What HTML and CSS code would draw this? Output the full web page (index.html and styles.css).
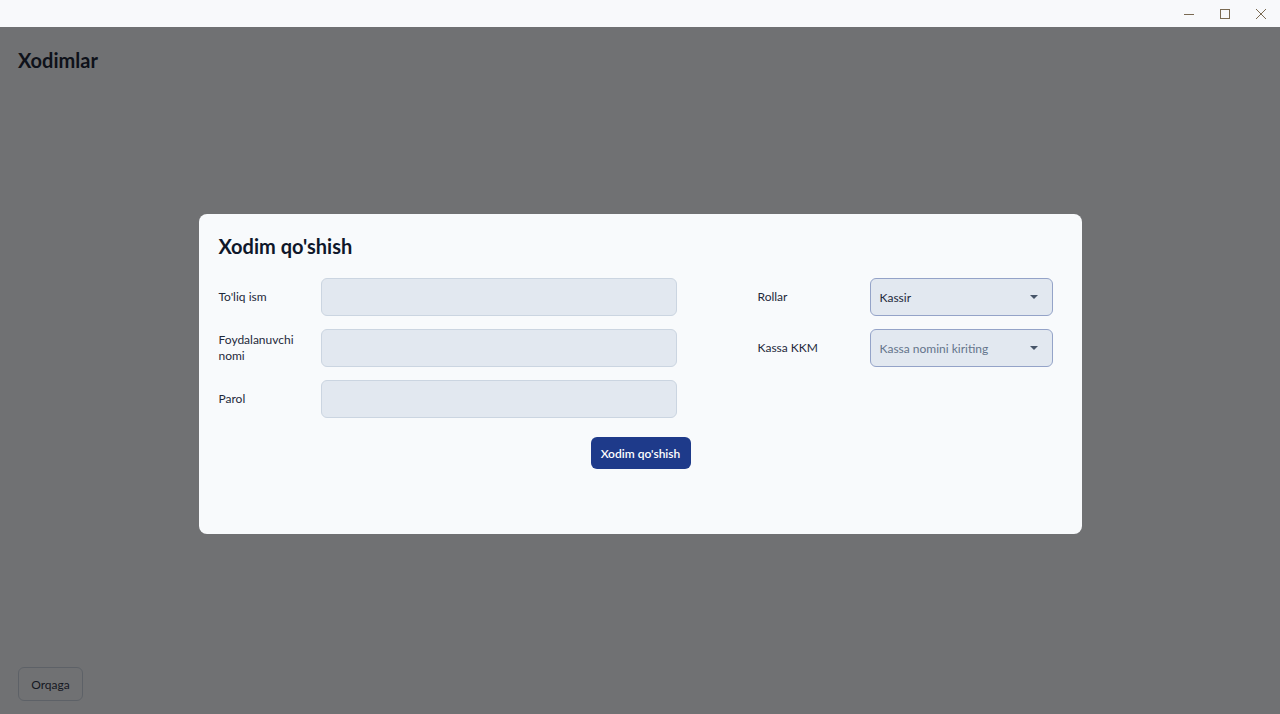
FILE: index.html
```html
<!DOCTYPE html>
<html>
<head>
  <title>Xodimlar</title>
  <link rel="stylesheet" href="styles.css">
</head>
<body>
  <div class="titlebar">
    <span class="win-btn">
      <svg width="10" height="10" viewBox="0 0 10 10"><path d="M0 5.5h10" stroke="currentColor" stroke-width="1"/></svg>
    </span>
    <span class="win-btn">
      <svg width="10" height="10" viewBox="0 0 10 10"><rect x="0.5" y="0.5" width="9" height="9" fill="none" stroke="currentColor" stroke-width="1"/></svg>
    </span>
    <span class="win-btn">
      <svg width="10" height="10" viewBox="0 0 10 10"><path d="M0 0L10 10M10 0L0 10" stroke="currentColor" stroke-width="1"/></svg>
    </span>
  </div>

  <div class="page">
    <h1 class="page-title">Xodimlar</h1>
    <button class="back-btn">Orqaga</button>

    <div class="overlay">
      <div class="modal">
        <h2 class="modal-title">Xodim qo'shish</h2>
        <div class="form-grid">
          <div class="col">
            <div class="row">
              <label class="label">To'liq ism</label>
              <input class="input" type="text">
            </div>
            <div class="row">
              <label class="label">Foydalanuvchi nomi</label>
              <input class="input" type="text">
            </div>
            <div class="row">
              <label class="label">Parol</label>
              <input class="input" type="password">
            </div>
          </div>
          <div class="col">
            <div class="row">
              <label class="label">Rollar</label>
              <div class="select">
                <span>Kassir</span>
                <span class="caret"></span>
              </div>
            </div>
            <div class="row">
              <label class="label">Kassa KKM</label>
              <div class="select placeholder">
                <span>Kassa nomini kiriting</span>
                <span class="caret"></span>
              </div>
            </div>
          </div>
        </div>
        <div class="actions">
          <button class="primary-btn">Xodim qo'shish</button>
        </div>
      </div>
    </div>
  </div>
</body>
</html>
```

FILE: styles.css
```css
* {
  box-sizing: border-box;
}

body {
  margin: 0;
  font-family: Lato, "Noto Sans", sans-serif;
  color: #0f172a;
  background: #f8fafc;
  height: 714px;
  overflow: hidden;
}

.titlebar {
  height: 27px;
  background: #f8f9fb;
  display: flex;
  justify-content: flex-end;
  align-items: center;
  padding-right: 1px;
}

.win-btn {
  width: 36px;
  display: flex;
  justify-content: center;
  color: #7a6a52;
}

.page {
  position: relative;
  height: 687px;
  background: #f8fafc;
  padding: 20px 18px;
}

.page-title {
  margin: 0;
  font-size: 20px;
  font-weight: 700;
  line-height: 26px;
}

.back-btn {
  position: absolute;
  left: 18px;
  bottom: 13px;
  height: 34px;
  width: 65px;
  border: 1px solid #cbd5e1;
  border-radius: 6px;
  background: transparent;
  font-family: Lato, sans-serif;
  font-size: 12px;
  color: #1e293b;
}

.overlay {
  position: absolute;
  inset: 0;
  background: rgba(14, 14, 16, 0.58);
  display: flex;
  justify-content: center;
  padding-top: 187px;
}

.modal {
  width: 883px;
  height: 320px;
  background: #f8fafc;
  border-radius: 8px;
  padding: 22px 20px;
}

.modal-title {
  margin: 0 0 21px;
  font-size: 20px;
  font-weight: 700;
  line-height: 21px;
}

.form-grid {
  display: grid;
  grid-template-columns: 458px 295px;
  column-gap: 81px;
}

.col {
  display: flex;
  flex-direction: column;
  gap: 13px;
}

.row {
  display: flex;
  align-items: center;
}

.label {
  font-size: 12px;
  line-height: 16px;
  color: #1e293b;
  width: 102px;
  padding-right: 20px;
}

.col + .col .label {
  width: 112px;
}

.input {
  width: 356px;
  height: 38px;
  background: #e2e8f0;
  border: 1px solid #cbd5e1;
  border-radius: 6px;
}

.select {
  width: 183px;
  height: 38px;
  background: #e2e8f0;
  border: 1px solid #94a3c8;
  border-radius: 6px;
  display: flex;
  align-items: center;
  justify-content: space-between;
  padding: 0 14px 0 9px;
  font-size: 12px;
  color: #1e293b;
}

.select.placeholder {
  color: #64748b;
}

.caret {
  width: 0;
  height: 0;
  border-left: 4px solid transparent;
  border-right: 4px solid transparent;
  border-top: 4px solid #475569;
}

.actions {
  display: flex;
  justify-content: center;
  margin-top: 19px;
  padding-left: 1px;
}

.primary-btn {
  width: 100px;
  height: 32px;
  background: #1e3a8a;
  color: #fff;
  border: none;
  border-radius: 6px;
  font-family: Lato, sans-serif;
  font-size: 12px;
  font-weight: 600;
}
```
